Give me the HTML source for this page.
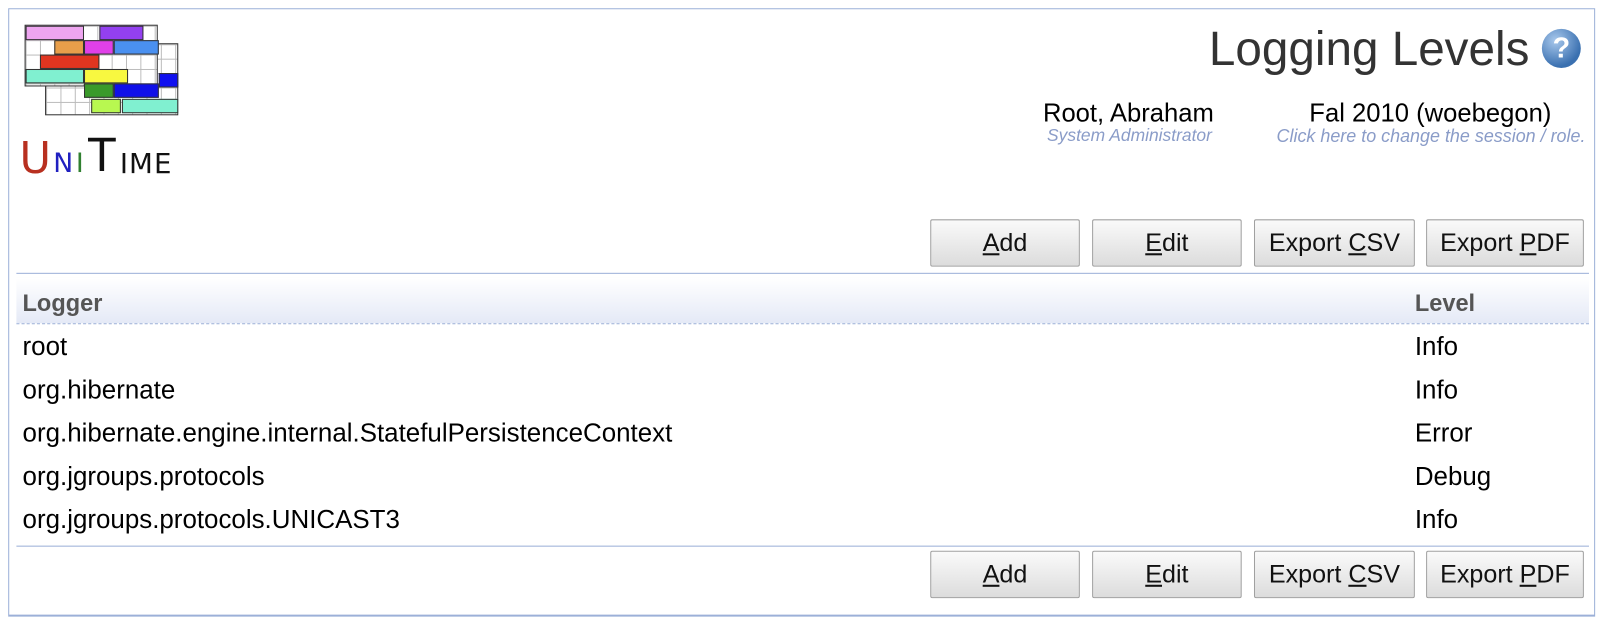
<!DOCTYPE html>
<html><head><style>
body{margin:0;width:1606px;height:620px;background:#fff;font-family:"Liberation Sans",sans-serif;position:relative;overflow:hidden}
#w{position:absolute;left:0;top:0;width:1560px;height:603px;transform:scale(1.0245,1.0295);transform-origin:0 0}
.abs{position:absolute}
.frame{left:8px;top:8px;width:1547px;height:588px;border:1px solid #9cb0d8;border-bottom:2px solid #9cb0d8}
.btn{position:absolute;height:46px;border:1px solid #a0a0a0;border-radius:2px;background:linear-gradient(#fafafa,#dcdcdc);font-size:24.5px;text-align:center;line-height:46px;color:#111;box-sizing:border-box}
.row{position:absolute;font-size:25.3px;color:#000;line-height:29px}
.c{position:absolute;border:1px solid #333}
.L{position:absolute;font-family:"DejaVu Sans",sans-serif;line-height:1}
</style></head><body><div id="w">
<div class="abs frame"></div>
<div class="abs" style="left:44px;top:42px;width:128px;height:68px;border:1.5px solid #333;background:#fff;background-image:linear-gradient(90deg,#bbb 1px,transparent 1px),linear-gradient(#bbb 1px,transparent 1px);background-size:14px 14px"></div>
<div class="abs" style="left:24px;top:24px;width:128px;height:58px;border:1.5px solid #333;background:#fff;background-image:linear-gradient(90deg,#bbb 1px,transparent 1px),linear-gradient(#bbb 1px,transparent 1px);background-size:14px 14px"></div>
<div class="c" style="left:25px;top:25px;width:55px;height:12px;background:#eea5f0"></div>
<div class="c" style="left:97px;top:25px;width:41px;height:12px;background:#9340f0"></div>
<div class="c" style="left:53px;top:39px;width:27px;height:12px;background:#e89e4a"></div>
<div class="c" style="left:82px;top:39px;width:27px;height:12px;background:#e040e8"></div>
<div class="c" style="left:111px;top:39px;width:42px;height:12px;background:#4a90f0"></div>
<div class="c" style="left:39px;top:53px;width:56px;height:12px;background:#e03520"></div>
<div class="c" style="left:25px;top:67px;width:55px;height:12px;background:#80f0d0"></div>
<div class="c" style="left:82px;top:67px;width:41px;height:12px;background:#f8f840"></div>
<div class="c" style="left:155px;top:71px;width:17px;height:12px;background:#1010f0"></div>
<div class="c" style="left:82px;top:81px;width:27px;height:12px;background:#3a9a2a"></div>
<div class="c" style="left:111px;top:81px;width:42px;height:12px;background:#1010e8"></div>
<div class="c" style="left:89px;top:96px;width:27px;height:12px;background:#b8f850"></div>
<div class="c" style="left:119px;top:96px;width:53px;height:12px;background:#80f0d0"></div>
<div class="L" style="left:19px;top:133px;font-size:42px;color:#b83020">U</div>
<div class="L" style="left:52px;top:146px;font-size:26px;color:#2020c0">N</div>
<div class="L" style="left:74px;top:146px;font-size:26px;color:#308030">I</div>
<div class="L" style="left:86px;top:130px;font-size:44px;color:#111">T</div>
<div class="L" style="left:117px;top:146px;font-size:27px;color:#111;letter-spacing:1px">IME</div>
<div class="abs" style="left:1180px;top:20px;font-size:46.5px;color:#333;line-height:54px">Logging Levels</div>
<div class="abs" style="left:1505px;top:28px;width:38px;height:38px;border-radius:50%;background:radial-gradient(circle at 35% 30%,#a8c8ec,#3a70b0 70%);color:#fff;font-weight:bold;font-size:28px;text-align:center;line-height:38px">?</div>
<div class="abs" style="left:1018px;top:96px;font-size:25px;line-height:29px">Root, Abraham</div>
<div class="abs" style="left:1022px;top:122px;width:165px;overflow:hidden;white-space:nowrap;font-size:17px;font-style:italic;color:#8a9cc8">System Administrator</div>
<div class="abs" style="left:1278px;top:96px;font-size:25px;line-height:29px">Fal 2010 (woebegon)</div>
<div class="abs" style="left:1246px;top:122px;font-size:17.5px;font-style:italic;color:#8a9cc8;white-space:nowrap">Click here to change the session / role.</div>
<div class="btn" style="left:908px;top:213px;width:146px"><u>A</u>dd</div>
<div class="btn" style="left:1066px;top:213px;width:146px"><u>E</u>dit</div>
<div class="btn" style="left:1224px;top:213px;width:157px">Export <u>C</u>SV</div>
<div class="btn" style="left:1392px;top:213px;width:154px">Export <u>P</u>DF</div>
<div class="abs" style="left:16px;top:265px;width:1535px;height:1px;background:#9cb0d8"></div>
<div class="abs" style="left:16px;top:270px;width:1535px;height:44px;background:linear-gradient(#fff,#e4e9f6);border-bottom:1px dashed #9cb0d8"></div>
<div class="row" style="left:22px;top:280px;font-weight:bold;color:#555;font-size:23px">Logger</div>
<div class="row" style="left:1381px;top:280px;font-weight:bold;color:#555;font-size:23px">Level</div>
<div class="row" style="left:22px;top:323px">root</div><div class="row" style="left:1381px;top:323px">Info</div>
<div class="row" style="left:22px;top:365px">org.hibernate</div><div class="row" style="left:1381px;top:365px">Info</div>
<div class="row" style="left:22px;top:407px">org.hibernate.engine.internal.StatefulPersistenceContext</div><div class="row" style="left:1381px;top:407px">Error</div>
<div class="row" style="left:22px;top:449px">org.jgroups.protocols</div><div class="row" style="left:1381px;top:449px">Debug</div>
<div class="row" style="left:22px;top:491px">org.jgroups.protocols.UNICAST3</div><div class="row" style="left:1381px;top:491px">Info</div>
<div class="abs" style="left:16px;top:530px;width:1535px;height:1px;background:#9cb0d8"></div>
<div class="btn" style="left:908px;top:535px;width:146px"><u>A</u>dd</div>
<div class="btn" style="left:1066px;top:535px;width:146px"><u>E</u>dit</div>
<div class="btn" style="left:1224px;top:535px;width:157px">Export <u>C</u>SV</div>
<div class="btn" style="left:1392px;top:535px;width:154px">Export <u>P</u>DF</div>
</div></body></html>
